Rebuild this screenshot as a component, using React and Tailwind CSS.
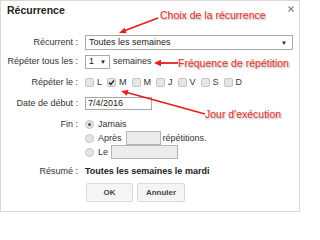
const days = [
  { d: "L", on: false },
  { d: "M", on: true },
  { d: "M", on: false },
  { d: "J", on: false },
  { d: "V", on: false },
  { d: "S", on: false },
  { d: "D", on: false },
];

const Check = ({ on }) => (
  <span className="flex h-[9px] w-[9px] items-center justify-center rounded-[2px] border border-[#c4c4c4] bg-[#e6e6e6]">
    {on && (
      <svg width="7" height="7" viewBox="0 0 7 7">
        <path d="M1 3.6 L2.8 5.4 L6 1.4" fill="none" stroke="#222" strokeWidth="1.4" />
      </svg>
    )}
  </span>
);

const Radio = ({ on }) => (
  <span className="flex h-[9px] w-[9px] items-center justify-center rounded-full border border-[#c4c4c4] bg-[#e4e4e4]">
    {on && <span className="h-[3px] w-[3px] rounded-full bg-[#555]" />}
  </span>
);

const Row = ({ label, h, className = "", children }) => (
  <div className={`flex items-center ${h} ${className}`}>
    <div className="w-[77px] text-right">{label}</div>
    <div className="ml-[7px] flex flex-1 items-center">{children}</div>
  </div>
);

const Callout = ({ className, children }) => (
  <span
    className={`absolute text-[10.5px] leading-none text-[#e8302a] [text-shadow:1px_1px_2px_rgba(0,0,0,0.35)] ${className}`}
  >
    {children}
  </span>
);

export default function App() {
  return (
    <div className="relative h-[212px] w-[300px] overflow-hidden border border-[#d8d8d8] bg-white font-['Liberation_Sans',Arial,sans-serif] text-[9px] leading-none text-[#333]">
      {/* Header */}
      <div className="flex h-[33px] items-start justify-between pl-[6px] pr-[5px] pt-[4px]">
        <span className="text-[10.5px] font-bold text-[#222]">Récurrence</span>
        <svg width="6" height="6" viewBox="0 0 6 6" className="mt-[1px]">
          <path d="M0.5 0.5 L5.5 5.5 M5.5 0.5 L0.5 5.5" stroke="#888" strokeWidth="1.2" />
        </svg>
      </div>

      <Row label="Récurrent :" h="h-[17px]">
        <div className="flex h-[15px] w-[208px] items-center justify-between border border-[#a9a9a9] bg-white pl-[3px] pr-[5px] text-[#222]">
          <span>Toutes les semaines</span>
          <span className="text-[6px]">▼</span>
        </div>
      </Row>

      <Row label="Répéter tous les :" h="h-[21px]">
        <div className="flex h-[14px] w-[25px] items-center justify-between border border-[#a9a9a9] bg-white pl-[3px] pr-[3px] text-[#222]">
          <span>1</span>
          <span className="text-[6px]">▼</span>
        </div>
        <span className="ml-[3px]">semaines</span>
      </Row>

      <Row label="Répéter le :" h="h-[21px]">
        <div className="flex items-center gap-[5px]">
          {days.map((x, i) => (
            <span key={i} className="flex items-center gap-[3px]">
              <Check on={x.on} />
              <span>{x.d}</span>
            </span>
          ))}
        </div>
      </Row>

      <Row label="Date de début :" h="h-[20px]">
        <div className="flex h-[13px] w-[67px] items-center border border-[#a9a9a9] bg-white pl-[2px] text-[#222]">
          7/4/2016
        </div>
      </Row>

      <Row label="Fin :" h="h-[14px]" className="mt-[4px]">
        <Radio on />
        <span className="ml-[4px]">Jamais</span>
      </Row>
      <Row label="" h="h-[14px]">
        <Radio />
        <span className="ml-[4px]">Après</span>
        <span className="ml-[4px] h-[14px] w-[35px] border border-[#b5b5b5] bg-[#ececec]" />
        <span className="ml-[2px]">répétitions.</span>
      </Row>
      <Row label="" h="h-[14px]">
        <Radio />
        <span className="ml-[4px]">Le</span>
        <span className="ml-[3px] h-[14px] w-[67px] border border-[#b5b5b5] bg-[#ececec]" />
      </Row>

      <Row label="Résumé :" h="h-[16px]" className="mt-[4px]">
        <span className="font-bold text-[#222]">Toutes les semaines le mardi</span>
      </Row>

      <div className="ml-[85px] mt-[4px] flex gap-[4px]">
        <button className="h-[19px] w-[47px] rounded-[2px] border border-[#dadada] bg-[#f5f5f5] text-[8px] font-bold text-[#444]">
          OK
        </button>
        <button className="h-[19px] w-[48px] rounded-[2px] border border-[#dadada] bg-[#f5f5f5] text-[8px] font-bold text-[#444]">
          Annuler
        </button>
      </div>

      {/* Annotations */}
      <svg className="pointer-events-none absolute left-0 top-0" width="300" height="212" viewBox="0 0 300 212">
        <g stroke="#e3201c" strokeWidth="1.8" fill="#e3201c">
          <line x1="157" y1="17" x2="124" y2="29.5" />
          <line x1="177" y1="62" x2="159" y2="62" />
          <line x1="204" y1="113" x2="126" y2="91.5" />
        </g>
        <g fill="#e3201c">
          <polygon points="118,32 125.6,32.3 123.5,26.7" />
          <polygon points="153,62 160,58.8 160,65.2" />
          <polygon points="120,90 127.5,88.9 125.9,94.7" />
        </g>
      </svg>
      <Callout className="left-[159px] top-[9px]">Choix de la récurrence</Callout>
      <Callout className="left-[177px] top-[57px]">Fréquence de répétition</Callout>
      <Callout className="left-[204px] top-[108px]">Jour d'exécution</Callout>
    </div>
  );
}
